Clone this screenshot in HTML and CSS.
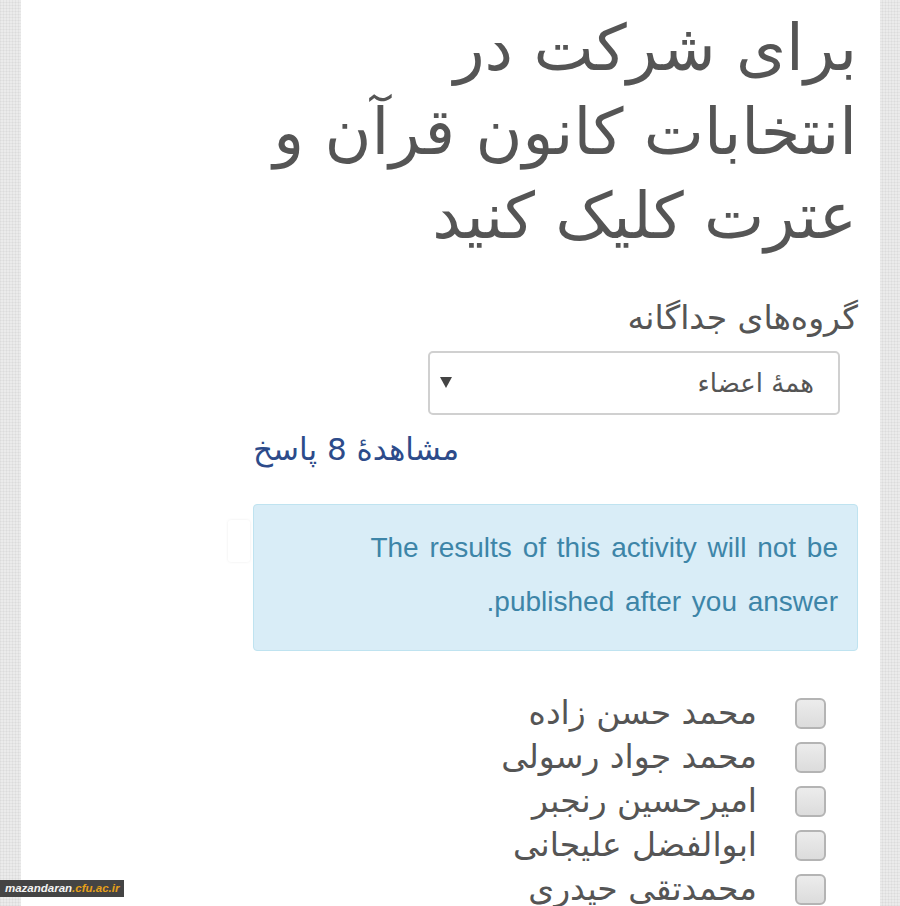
FILE: index.html
```html
<!DOCTYPE html>
<html lang="fa" dir="rtl">
<head>
    <meta charset="UTF-8" />
    <meta name="viewport" content="width=device-width, initial-scale=1.0" />
    <title>انتخابات کانون قرآن و عترت</title>
    <link rel="stylesheet" href="styles.css">
</head>
<body>
    <div class="page">
        <div class="main">
            <h1 class="title">برای شرکت در<br>انتخابات کانون قرآن و<br>عترت کلیک کنید</h1>

            <!-- Groups -->
            <div class="groups">
                <label class="groups-label" for="group">گروه‌های جداگانه</label>
                <div class="select-wrap">
                    <select id="group" class="select">
                        <option>همهٔ اعضاء</option>
                    </select>
                </div>
                <div class="responses">
                    <a href="#" class="responses-link">مشاهدهٔ 8 پاسخ</a>
                </div>
            </div>

            <!-- Notice -->
            <div class="alert">
                <span class="alert-tab"></span>
                The results of this activity will not be published after you answer.
            </div>

            <!-- Options -->
            <ul class="options">
                <li><label><input type="checkbox" class="check"> <span>محمد حسن زاده</span></label></li>
                <li><label><input type="checkbox" class="check"> <span>محمد جواد رسولی</span></label></li>
                <li><label><input type="checkbox" class="check"> <span>امیرحسین رنجبر</span></label></li>
                <li><label><input type="checkbox" class="check"> <span>ابوالفضل علیجانی</span></label></li>
                <li><label><input type="checkbox" class="check"> <span>محمدتقی حیدری</span></label></li>
            </ul>
        </div>
    </div>

    <div class="watermark" dir="ltr">mazandaran<span class="domain">.cfu.ac.ir</span></div>
</body>
</html>
```

FILE: styles.css
```css
html, body {
    height: 100%;
}

body {
    margin: 0;
    overflow: hidden;
    font-family: "DejaVu Sans", sans-serif;
    color: #555;
    background-color: #ebebeb;
    background-image:
        repeating-linear-gradient(0deg, rgba(0,0,0,0.035) 0 1px, transparent 1px 3px),
        repeating-linear-gradient(90deg, rgba(0,0,0,0.035) 0 1px, transparent 1px 3px);
}

.page {
    margin: 0 20px 0 21px;
    min-height: 100%;
    background: #fff;
    padding: 0 22px 0 232px;
}

.main {
    width: 605px;
}

.title {
    margin: 0;
    padding-top: 6px;
    padding-right: 1px;
    font-size: 64px;
    font-weight: normal;
    line-height: 84px;
    color: #555;
}

.groups {
    margin-top: 40px;
}

.groups-label {
    display: block;
    font-size: 33px;
    line-height: 40px;
    color: #555;
}

.select-wrap {
    position: relative;
    width: 412px;
    margin: 13px 18px 0 0;
}

.select {
    display: block;
    width: 100%;
    height: 64px;
    padding: 0 24px 0 40px;
    border: 2px solid #d0d0d0;
    border-radius: 5px;
    background: #fff;
    font-family: "DejaVu Sans", sans-serif;
    font-size: 26px;
    color: #555;
    appearance: none;
    -webkit-appearance: none;
}

.select-wrap::after {
    content: "";
    position: absolute;
    left: 12px;
    top: 26px;
    border-left: 6px solid transparent;
    border-right: 6px solid transparent;
    border-top: 11px solid #444;
}

.responses {
    margin-top: 14px;
    text-align: left;
}

.responses-link {
    font-size: 31px;
    line-height: 40px;
    color: #2d4b8a;
    text-decoration: none;
}

.alert {
    position: relative;
    margin-top: 35px;
    padding: 16px 19px 21px;
    border: 1px solid #bfe3f0;
    border-radius: 4px;
    background: #d9edf7;
    color: #3d85a8;
    font-family: "Liberation Sans", Arial, sans-serif;
    font-size: 28px;
    line-height: 54px;
    word-spacing: 3px;
}

.alert-tab {
    position: absolute;
    left: -26px;
    top: 15px;
    width: 22px;
    height: 42px;
    background: #fff;
    border-radius: 3px;
    box-shadow: 0 0 3px rgba(0,0,0,0.08);
}

.options {
    list-style: none;
    margin: 40px 0 0;
    padding: 0 32px 0 0;
}

.options li {
    height: 44px;
}

.options label {
    display: flex;
    align-items: center;
    gap: 38px;
    font-size: 33px;
    line-height: 44px;
    color: #555;
}

.check {
    appearance: none;
    -webkit-appearance: none;
    width: 31px;
    height: 31px;
    margin: 0;
    border: 2px solid #b4b4b4;
    border-radius: 6px;
    background: linear-gradient(#ececec, #dcdcdc);
    flex: none;
}

.watermark {
    position: fixed;
    left: 0;
    bottom: 9px;
    padding: 0 5px;
    height: 17px;
    background: #444;
    color: #f4f4f4;
    font-family: "Liberation Sans", sans-serif;
    font-size: 11.5px;
    font-weight: bold;
    font-style: italic;
    line-height: 17px;
    white-space: nowrap;
}

.domain {
    color: #e6a019;
}
```
